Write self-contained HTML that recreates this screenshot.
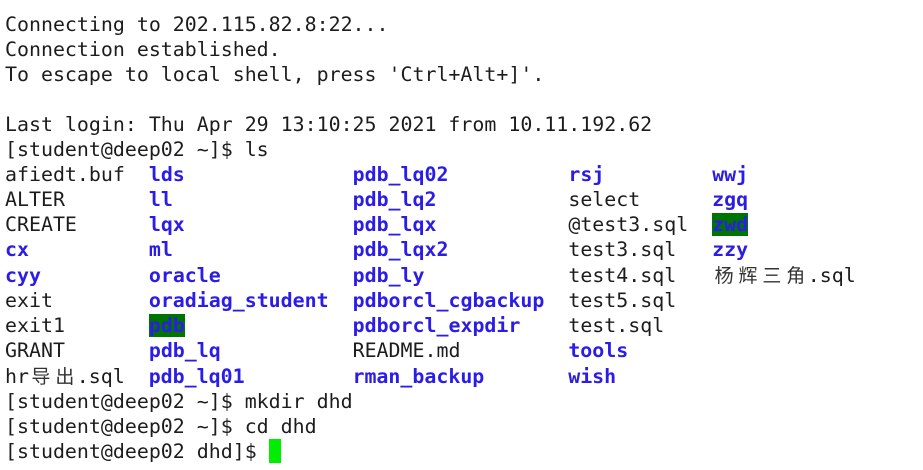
<!DOCTYPE html>
<html><head><meta charset="utf-8"><style>
html,body{margin:0;padding:0;background:#fff;width:923px;height:470px;overflow:hidden}
pre{margin:0;padding:11.5px 0 0 5px;font-family:"DejaVu Sans Mono","Liberation Mono","Noto Sans CJK SC",monospace;font-size:19.92px;line-height:25px;color:#1c1c1c;white-space:pre}
b{color:#2b1de6;font-weight:bold}
.g{background:#007400}
.c{display:inline-block;width:23.9px;text-align:center;font-family:"Noto Sans CJK SC",sans-serif;font-size:19px;line-height:25px;color:#333}
.cur{display:inline-block;width:12px;height:24px;background:#00ee00;vertical-align:-5px}
</style></head><body><pre>Connecting to 202.115.82.8:22...
Connection established.
To escape to local shell, press 'Ctrl+Alt+]'.

Last login: Thu Apr 29 13:10:25 2021 from 10.11.192.62
[student@deep02 ~]$ ls
afiedt.buf  <b>lds</b>              <b>pdb_lq02</b>          <b>rsj</b>         <b>wwj</b>
ALTER       <b>ll</b>               <b>pdb_lq2</b>           select      <b>zgq</b>
CREATE      <b>lqx</b>              <b>pdb_lqx</b>           @test3.sql  <b class="g">zwd</b>
<b>cx</b>          <b>ml</b>               <b>pdb_lqx2</b>          test3.sql   <b>zzy</b>
<b>cyy</b>         <b>oracle</b>           <b>pdb_ly</b>            test4.sql   <span class="c">杨</span><span class="c">辉</span><span class="c">三</span><span class="c">角</span>.sql
exit        <b>oradiag_student</b>  <b>pdborcl_cgbackup</b>  test5.sql
exit1       <b class="g">pdb</b>              <b>pdborcl_expdir</b>    test.sql
GRANT       <b>pdb_lq</b>           README.md         <b>tools</b>
hr<span class="c">导</span><span class="c">出</span>.sql  <b>pdb_lq01</b>         <b>rman_backup</b>       <b>wish</b>
[student@deep02 ~]$ mkdir dhd
[student@deep02 ~]$ cd dhd
[student@deep02 dhd]$ <span class="cur"></span></pre></body></html>
